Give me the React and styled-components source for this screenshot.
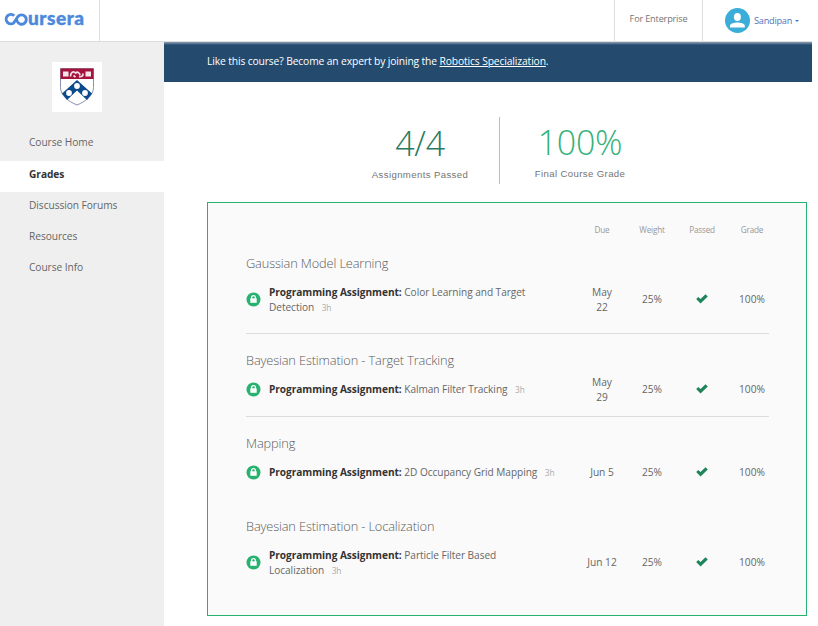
import React from 'react';
import styled, { createGlobalStyle } from 'styled-components';

const GlobalStyle = createGlobalStyle`
  * { box-sizing: border-box; }
  body { margin: 0; background: #fff; font-family: "Open Sans", "Noto Sans", sans-serif; color: #666; }
`;
const Page = styled.div`width: 812px; height: 626px; overflow: hidden; display: flex; flex-direction: column;`;
const Header = styled.header`height: 42px; display: flex; flex: none; border-bottom: 1px solid #dedede;`;
const Brand = styled.a`width: 100px; border-right: 1px solid #dedede; padding: 0 0 4px 4px; display: flex; align-items: center; color: #4a89dc; svg { flex: none; }`;
const BrandText = styled.span`font: 900 19px/20px Lato, sans-serif; letter-spacing: 0.55px; margin: -2px 0 0 -1px; -webkit-text-stroke: 0.4px currentColor;`;
const Spacer = styled.div`flex: 1;`;
const Enterprise = styled.a`width: 89px; border: solid #dedede; border-width: 0 1px; font-size: 9.2px; letter-spacing: -0.2px; line-height: 38px; text-align: center; color: #757575; white-space: nowrap;`;
const Account = styled.div`width: 109px; display: flex; align-items: center; padding-left: 22px; font-size: 9.2px; color: #5573b8; svg { flex: none; }`;
const UserName = styled.span`margin: 0 3px 0 4px; letter-spacing: -0.25px;`;
const Caret = styled.i`border: 2.5px solid transparent; border-top: 2px solid #3a7bd5; border-bottom: 0;`;
const Body = styled.div`flex: 1; display: flex; min-height: 0;`;
const Sidebar = styled.aside`width: 164px; background: #efefef; padding-top: 20px;`;
const School = styled.div`width: 50px; height: 50px; background: #fff; margin: 0 0 15px 52px; display: grid; place-items: center;`;
const NavItem = styled.a`display: block; height: 31px; line-height: 27px; padding-left: 29px; font-size: 10.2px; letter-spacing: -0.06px; color: #666;
  ${(p) => p.$first && 'height: 34px; line-height: 31px;'}
  ${(p) => p.$active && 'background: #fff; color: #333; font-weight: 700;'}`;
const Main = styled.main`flex: 1;`;
const Banner = styled.div`height: 40px; padding-left: 43px; line-height: 39px; font-size: 10.3px; font-weight: 500; letter-spacing: -0.13px; color: #fff; background: linear-gradient(#8fa1b3 0, #47678a 2px, #244b6e 3px); a { text-decoration: underline; }`;
const Stats = styled.div`margin: 35px 0 18px 43px; height: 67px; display: flex;`;
const Stat = styled.div`width: ${(p) => p.$w}px; margin-left: ${(p) => p.$ml || 0}px; display: flex; flex-direction: column; align-items: center; padding-top: ${(p) => p.$top}px;`;
const Figure = styled.div`font-weight: 300; font-size: 34px; line-height: 48px; color: ${(p) => p.$c}; letter-spacing: -0.3px;`;
const Caption = styled.div`font: 9.6px/14px "Liberation Sans", Arial, sans-serif; letter-spacing: 0.38px; margin-top: 1px; color: #757575; white-space: nowrap;`;
const Divider = styled.div`width: 1px; background: #bdbdbd;`;
const Card = styled.section`width: 600px; height: 414px; margin-left: 43px; border: 1px solid #27b270; background: #fafafa; padding: 17px 37px 0 38px;`;
const Columns = styled.div`display: grid; grid-template-columns: 1fr repeat(4, 50px); margin-right: -8px; align-items: center; text-align: center;`;
const HeadRow = styled(Columns)`height: 17px; font-size: 8.2px; letter-spacing: -0.2px; color: #999; span { padding-top: 2px; }`;
const Module = styled.article`height: ${(p) => (p.$tall ? 97 : 83)}px; padding-top: 16px; border-bottom: 1px solid ${(p) => (p.$line ? '#dcdcdc' : 'transparent')};`;
const Title = styled.h2`margin: 0 0 1px; font-weight: 300; font-size: 12.8px; letter-spacing: -0.14px; line-height: 20px; color: #5c5c5c;`;
const Row = styled(Columns)`height: ${(p) => (p.$tall ? 51 : 37)}px; font-size: 10.2px; line-height: 15px;`;
const Assignment = styled.div`display: flex; align-items: center; text-align: left; white-space: nowrap; gap: 8px; font-size: 10.1px; letter-spacing: -0.04px; svg { flex: none; } b { color: #333; }`;
const Duration = styled.small`font-size: 8.3px; color: #aaa; margin-left: 7.5px;`;
const Cell = styled.div`color: #666; svg { display: block; margin: -2px auto 0; }`;

const Lines = ({ text }) => text.split('\n').map((t, i) => <React.Fragment key={i}>{i > 0 && <br />}{t}</React.Fragment>);
const LockBadge = () => (
  <svg width="15" height="15" viewBox="0 0 15 15"><circle cx="7.5" cy="7.5" r="7" fill="#27b270" /><path d="M4.3 6.3h6.4v4.5H4.3z" fill="#fff" /><path d="M5.6 7V5.5a1.9 1.9 0 0 1 3.8 0V7" fill="none" stroke="#fff" strokeWidth="1.3" /></svg>
);
const Check = () => (
  <svg width="12" height="10" viewBox="0 0 12 10"><path d="M.2 5 2.3 2.9 4.5 4.9 9.5.2 11.8 2.4 4.5 9.5z" fill="#1f8459" /></svg>
);
const Avatar = () => (
  <svg width="25" height="25" viewBox="0 0 25 25"><circle cx="12.5" cy="12.5" r="12.5" fill="#3badd9" /><ellipse cx="12.4" cy="9" rx="3.5" ry="4" fill="#fff" /><path d="M5 19.5v-1.7c0-2.2 4.5-3.3 7.5-3.3s7.3 1.1 7.3 3.3v1.7z" fill="#fff" /></svg>
);
const Infinity = () => (
  <svg width="25" height="14" viewBox="0 0 25 14"><path d="M10.2 3.8A4.7 4.7 0 1 0 9.8 10.8L14 4.5A4.7 4.7 0 1 1 13.3 9.5L12.4 7.2" fill="none" stroke="currentColor" strokeWidth="2.9" /></svg>
);
const Shield = () => (
  <svg width="36" height="40" viewBox="0 0 36 40">
    <path d="M1.5 1.5h33v19c0 8-8 14-16.5 17.5C9.5 34.5 1.5 28.5 1.5 20.5z" fill="#fff" stroke="#8791ad" />
    <path d="M1.5 1.5h33v10.5h-33z" fill="#a5123b" />
    <path d="M4 4.5h5.5v5H4zM26.5 4.5H32v5h-5.5z" fill="#f6e6eb" />
    <path d="M11.5 9.5c0-4 3-6 5-3.5 2-1.5 4-.5 4.5 2M14.5 8.5l2 1.5M20 9.5c3 .5 4-.5 4-3" fill="none" stroke="#f3dde4" strokeWidth="1.8" />
    <path d="M18 13 33 26.5 28 33 18 23.5 8 33 3 26.5z" fill="#0b4a8b" />
    <g fill="#fff"><circle cx="18" cy="19" r="2.9" /><circle cx="10" cy="26" r="2.9" /><circle cx="26" cy="26" r="2.9" /></g>
  </svg>
);

const modules = [
  { title: 'Gaussian Model Learning', name: 'Color Learning and Target\nDetection', due: 'May\n22', tall: true, line: true },
  { title: 'Bayesian Estimation - Target Tracking', name: 'Kalman Filter Tracking', due: 'May\n29', line: true },
  { title: 'Mapping', name: '2D Occupancy Grid Mapping', due: 'Jun 5' },
  { title: 'Bayesian Estimation - Localization', name: 'Particle Filter Based\nLocalization', due: 'Jun 12', tall: true },
];

export default function App() {
  return (
    <Page>
      <GlobalStyle />
      <Header>
        <Brand aria-label="coursera"><Infinity /><BrandText>ursera</BrandText></Brand>
        <Spacer />
        <Enterprise>For Enterprise</Enterprise>
        <Account><Avatar /><UserName>Sandipan</UserName><Caret /></Account>
      </Header>
      <Body>
        <Sidebar>
          <School><Shield /></School>
          <NavItem $first>Course Home</NavItem>
          <NavItem $active>Grades</NavItem>
          <NavItem>Discussion Forums</NavItem>
          <NavItem>Resources</NavItem>
          <NavItem>Course Info</NavItem>
        </Sidebar>
        <Main>
          <Banner>Like this course? Become an expert by joining the <a>Robotics Specialization</a>.</Banner>
          <Stats>
            <Stat $w={158} $ml={134} $top={2}><Figure $c="#2a7a62">4/4</Figure><Caption>Assignments Passed</Caption></Stat>
            <Divider />
            <Stat $w={160} $top={1}><Figure $c="#34b27a">100%</Figure><Caption>Final Course Grade</Caption></Stat>
          </Stats>
          <Card>
            <HeadRow><span /><span>Due</span><span>Weight</span><span>Passed</span><span>Grade</span></HeadRow>
            {modules.map((m) => (
              <Module key={m.title} $tall={m.tall} $line={m.line}>
                <Title>{m.title}</Title>
                <Row $tall={m.tall}>
                  <Assignment><LockBadge /><div><b>Programming Assignment:</b> <Lines text={m.name} /><Duration>3h</Duration></div></Assignment>
                  <Cell><Lines text={m.due} /></Cell>
                  <Cell>25%</Cell>
                  <Cell><Check /></Cell>
                  <Cell>100%</Cell>
                </Row>
              </Module>
            ))}
          </Card>
        </Main>
      </Body>
    </Page>
  );
}
